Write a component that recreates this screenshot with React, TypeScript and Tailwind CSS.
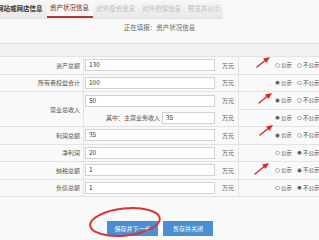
import React from "react";

type Pub = "yes" | "no" | null;

interface RowType {
  label: string;
  value: string;
  pub: Pub;
}

const tabs = [
  { name: "网站或网店信息", state: "done" },
  { name: "资产状况信息", state: "active" },
  { name: "对外投资信息", state: "off" },
  { name: "对外担保信息", state: "off" },
  { name: "预览并公示", state: "off" },
];

const before: RowType[] = [
  { label: "资产总额", value: "130", pub: null },
  { label: "所有者权益合计", value: "100", pub: "yes" },
];

const after: RowType[] = [
  { label: "利润总额", value: "35", pub: "yes" },
  { label: "净利润", value: "20", pub: "no" },
  { label: "纳税总额", value: "1", pub: "no" },
  { label: "负债总额", value: "1", pub: "no" },
];

const Radio = ({ on }: { on: boolean }) => (
  <span className="w-[4.5px] h-[4.5px] shrink-0 rounded-full border-[0.8px] border-[#b0b0b0] bg-white flex items-center justify-center">
    {on && <span className="w-[2.6px] h-[2.6px] rounded-full bg-[#4d4d4d]" />}
  </span>
);

const PubCell = ({ pub }: { pub: Pub }) => (
  <div className="h-[16.5px] flex items-center pl-[36px] gap-[5px] text-[5.5px] text-[#444] whitespace-nowrap">
    <span className="flex items-center gap-[1.5px] shrink-0">
      <Radio on={pub === "yes"} />
      公示
    </span>
    <span className="flex items-center gap-[1.5px] shrink-0">
      <Radio on={pub === "no"} />
      不公示
    </span>
  </div>
);

const Input = ({ value, w = "w-[130px]" }: { value: string; w?: string }) => (
  <div className={`${w} h-[12px] border border-[#d2d2d2] bg-white flex items-center px-[3px] text-[6.5px] text-[#333]`}>
    {value}
  </div>
);

const SimpleRow = ({ row }: { row: RowType }) => (
  <div className="flex border-b border-[#e3e3e3]">
    <div className="w-[84px] shrink-0 h-[16.5px] flex items-center justify-end pr-[3px] border-r border-[#e3e3e3] text-[6px] text-[#555]">
      {row.label}
    </div>
    <div className="w-[155px] shrink-0 h-[16.5px] flex items-center pl-[1px] border-r border-[#e3e3e3]">
      <Input value={row.value} />
      <span className="ml-[7px] text-[6px] text-[#555]">万元</span>
    </div>
    <div className="flex-1 min-w-0">
      <PubCell pub={row.pub} />
    </div>
  </div>
);

const Arrow = ({ x, y, len = 12 }: { x: number; y: number; len?: number }) => (
  <svg
    className="absolute pointer-events-none"
    style={{ left: x, top: y }}
    width={len + 4}
    height={len}
    viewBox={`0 0 ${len + 4} ${len}`}
  >
    <line x1="1" y1={len - 1} x2={len - 1} y2="3" stroke="#d92b2b" strokeWidth="1.4" strokeLinecap="round" />
    <polygon points={`${len + 2},1 ${len - 5},2.5 ${len - 1.5},7`} fill="#d92b2b" />
  </svg>
);

export default function App() {
  return (
    <div className="relative w-[319px] h-[240px] overflow-hidden bg-[#f9f9f9] font-['Noto_Sans_CJK_SC',sans-serif]">
      {/* tabs */}
      <div className="w-[223px] h-[19px] flex items-stretch bg-gradient-to-b from-[#f7f7f7] to-[#e9e9e9] border-b border-[#e0e0e0]">
        {tabs.map((t, i) => (
          <div
            key={t.name}
            className={`flex items-center whitespace-nowrap text-[6.5px] ${
              i === 0 ? "-ml-[3px] pr-[4px]" : "px-[3.5px]"
            } ${
              t.state === "active"
                ? "text-[#6b2b2b] border-b-2 border-[#b33a3a] bg-[#f7f7f7]"
                : t.state === "done"
                ? "text-[#333] font-bold"
                : "text-[#bdbdbd]"
            }`}
          >
            {t.name}
          </div>
        ))}
      </div>

      <div className="h-[15px] flex items-center justify-center pt-[2px] text-[6.5px] text-[#666]">
        正在填报：资产状况信息
      </div>

      {/* table */}
      <div className="mt-[9px] border-t border-[#dcdcdc]">
        <div className="h-[13px] bg-[#f2f2f2] border-b border-[#e3e3e3]" />
        {before.map((r) => (
          <SimpleRow key={r.label} row={r} />
        ))}

        {/* 营业总收入 */}
        <div className="flex border-b border-[#e3e3e3]">
          <div className="w-[84px] shrink-0 flex items-center justify-end pr-[3px] border-r border-[#e3e3e3] text-[6px] text-[#555]">
            营业总收入
          </div>
          <div className="w-[155px] shrink-0 border-r border-[#e3e3e3]">
            <div className="h-[17px] flex items-center pl-[1px]">
              <Input value="50" />
              <span className="ml-[7px] text-[6px] text-[#555]">万元</span>
            </div>
            <div className="h-[17px] flex items-center pl-[1px]">
              <span className="w-[77px] text-right pr-[2px] text-[6px] text-[#555]">其中：主营业务收入</span>
              <Input value="35" w="w-[53px]" />
              <span className="ml-[7px] text-[6px] text-[#555]">万元</span>
            </div>
          </div>
          <div className="flex-1 min-w-0">
            <div className="border-b border-[#e3e3e3]">
              <PubCell pub="yes" />
            </div>
            <PubCell pub="yes" />
          </div>
        </div>

        {after.map((r) => (
          <SimpleRow key={r.label} row={r} />
        ))}
      </div>

      {/* buttons */}
      <div className="mt-[24px] flex justify-center gap-[5px] pl-[1px]">
        <button className="w-[51px] h-[15px] bg-[#4a8fd4] text-white text-[6px] flex items-center justify-center">
          保存并下一步
        </button>
        <button className="w-[50px] h-[15px] bg-[#4a8fd4] text-white text-[6px] flex items-center justify-center">
          暂存并关闭
        </button>
      </div>

      {/* annotations */}
      <Arrow x={256} y={56} />
      <Arrow x={258} y={92} />
      <Arrow x={259} y={124} />
      <Arrow x={254} y={162} len={13} />
      <svg className="absolute pointer-events-none" style={{ left: 86, top: 204 }} width="80" height="36" viewBox="0 0 80 36">
        <ellipse cx="39" cy="18" rx="35" ry="13.5" fill="none" stroke="#d63636" strokeWidth="2" transform="rotate(-6 39 18)" />
      </svg>
    </div>
  );
}
